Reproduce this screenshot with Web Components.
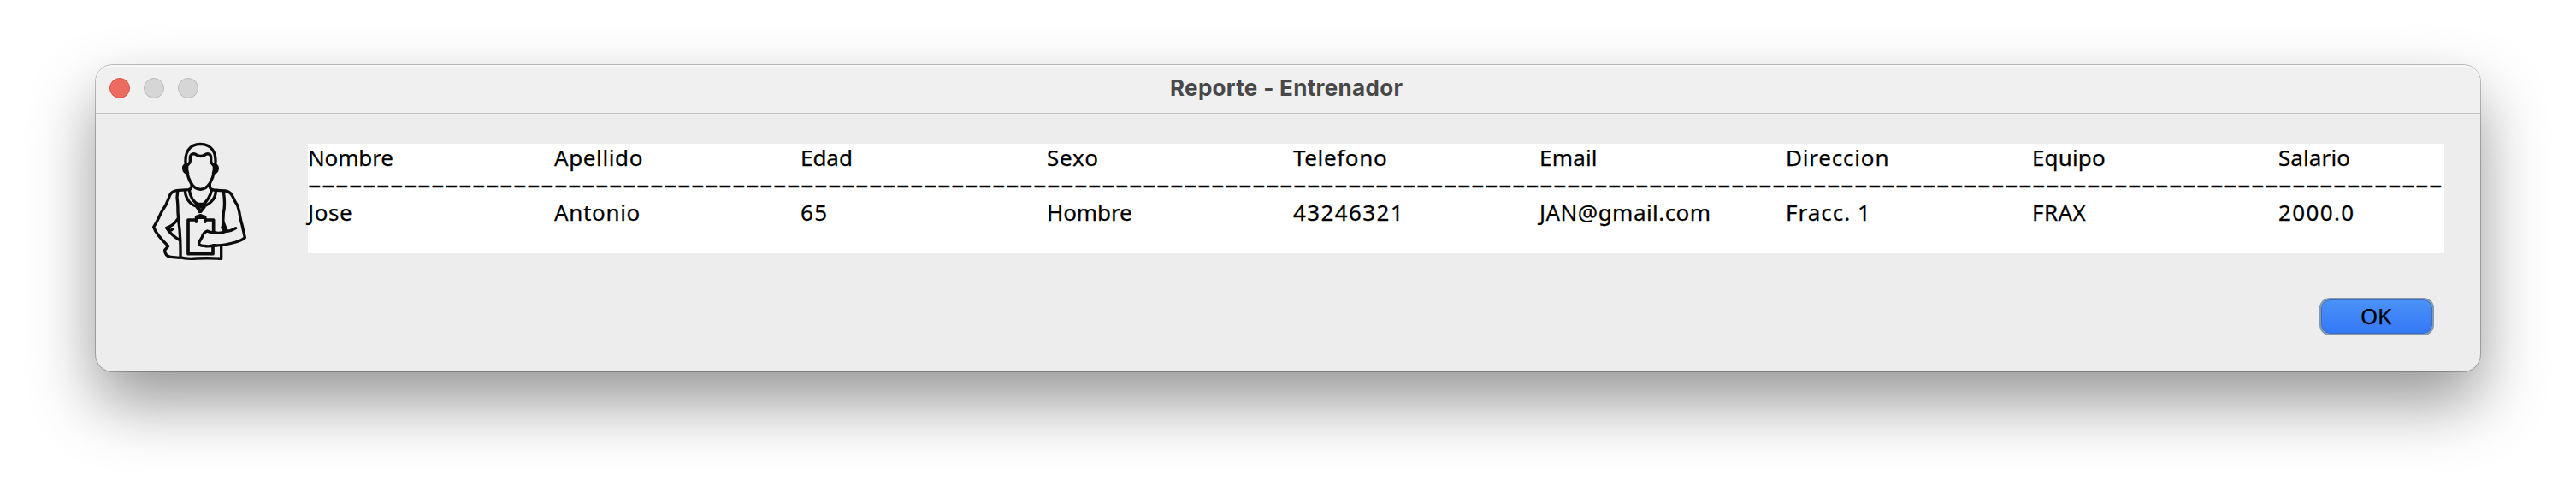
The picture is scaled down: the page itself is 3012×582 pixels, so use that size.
<!DOCTYPE html>
<html lang="es">
<head>
<meta charset="utf-8">
<title>Reporte - Entrenador</title>
<style>
html,body{margin:0;background:#fff}
body{width:3012px;height:582px;overflow:hidden;box-sizing:border-box;padding:76px 0 0 112px;font:26px/32px "Noto Sans",sans-serif;color:#000}
</style>
</head>
<body>
<report-window>
  <window-bar slot="bar"><fit-text ink="272.5" style="font:700 26px/32px Inter,sans-serif">Reporte - Entrenador</fit-text></window-bar>
  <trainer-icon slot="icon"></trainer-icon>
  <report-table slot="report"></report-table>
  <push-button slot="actions"><fit-text ink="37">OK</fit-text></push-button>
</report-window>
<script>
const mount = (el, html) => { el.attachShadow({mode:'open'}).innerHTML = html; };

// Text tracked so that its drawn width equals the "ink" attribute.
customElements.define('fit-text', class extends HTMLElement {
  connectedCallback() {
    if (this.shadowRoot) return;
    mount(this, `<style>:host{display:inline-block;white-space:pre}</style><slot></slot>`);
    const cs = getComputedStyle(this), t = this.textContent;
    const ctx = document.createElement('canvas').getContext('2d');
    ctx.font = `${cs.fontWeight} ${cs.fontSize} ${cs.fontFamily}`;
    const right = ctx.measureText(t).actualBoundingBoxRight;
    this.style.letterSpacing = ((+this.getAttribute('ink') - right) / (t.length - 1)).toFixed(3) + 'px';
  }
});

customElements.define('report-window', class extends HTMLElement {
  connectedCallback() {
    mount(this, `<style>
      :host{display:flex;flex-direction:column;width:2788px;height:358px;border-radius:20px;background:#ededed;
        box-shadow:0 0 0 1px rgba(0,0,0,.24),0 36px 76px rgba(0,0,0,.41)}
      .body{display:flex;padding-top:35px}
      .icon{width:248px;height:128px;display:flex}
      .actions{display:flex;justify-content:flex-end;padding:52px 54px 0 0}
    </style>
    <slot name="bar"></slot>
    <div class="body"><div class="icon"><slot name="icon"></slot></div><slot name="report"></slot></div>
    <div class="actions"><slot name="actions"></slot></div>`);
  }
});

customElements.define('window-bar', class extends HTMLElement {
  connectedCallback() {
    mount(this, `<style>
      :host{display:grid;grid-template-columns:1256px 1fr;align-items:center;height:57px;box-sizing:border-box;padding-bottom:2px;
        background:#f0f0f0;border-bottom:1px solid #c6c6c6;border-radius:20px 20px 0 0;color:#484848;
        box-shadow:inset 0 2px 0 #f8f8f8}
      .lights{display:flex;gap:16px;padding-left:16px}
      i{width:24px;height:24px;border-radius:50%;box-sizing:border-box;background:#d6d6d6;border:1px solid #b9b9b9}
      i.close{background:#ed6b60;border-color:#d85347}
    </style><div class="lights"><i class="close"></i><i></i><i></i></div><slot></slot>`);
  }
});

customElements.define('report-table', class extends HTMLElement {
  connectedCallback() {
    const head = [['Nombre',99.2],['Apellido',102.7],['Edad',58.9],['Sexo',59.2],['Telefono',108.9],['Email',65.8],['Direccion',118.4],['Equipo',85],['Salario',83.2]];
    const data = [['Jose',51],['Antonio',99.5],['65',30.3],['Hombre',99],['43246321',123.8],['JAN@gmail.com',198.8],['Fracc. 1',94],['FRAX',63.5],['2000.0',87.2]];
    const row = r => `<div class="row">${r.map(([t,w]) => `<fit-text ink="${w}">${t}</fit-text>`).join('')}</div>`;
    mount(this, `<style>
      :host{display:block;width:2498px;height:128px;background:#fff;-webkit-text-stroke:.25px #000}
      .row{display:grid;grid-template-columns:repeat(9,288px);height:32px;width:2498px}
      .row fit-text{justify-self:start}
      .rule{height:32px;line-height:30px;width:1300px;white-space:pre;transform:scaleX(1.87);transform-origin:0 0;letter-spacing:.184px;-webkit-text-stroke:.5px #000}
    </style>${row(head)}<div class="rule">${'-'.repeat(156)}</div>${row(data)}`);
  }
});

customElements.define('push-button', class extends HTMLElement {
  connectedCallback() {
    mount(this, `<style>
      :host{display:flex;justify-content:center;align-items:center;width:134px;height:44px;box-sizing:border-box;border-radius:12px;
        border:2px solid #8599ae;background:linear-gradient(#4b92f8,#3377f6) padding-box;box-shadow:inset 0 0 0 1px #3c6fbd;
        padding:0 2px 2px 0;-webkit-text-stroke:.25px #000}
    </style><slot></slot>`);
  }
});

customElements.define('trainer-icon', class extends HTMLElement {
  connectedCallback() {
    mount(this, `<style>:host{display:block;margin:-17px 0 0 48px}svg{display:block}</style>
    <svg width="150" height="165" viewBox="0 0 450 495" fill="none" stroke="#0c0c0c" stroke-width="10" stroke-linecap="round" stroke-linejoin="round">
      <path d="M172 127C166 82 183 53 223 52C263 53 281 82 275 127"/>
      <path d="M176 127C182 121 187 121 187 112V97C190 84 202 84 211 91Q224 98 237 91C246 84 258 84 260 97V112C260 121 265 121 270 127"/>
      <path d="M176 127V148C180 174 193 210 223 211C253 210 267 174 271 148V127"/>
      <path d="M175 126C159 122 160 151 179 154M271 126C287 122 288 151 268 154M170 132L177 148M277 132L270 148"/>
      <path d="M192 191V202Q190 211 180 212L139 215Q123 217 116 231C107 254 105 264 89 286C79 302 78 314 59 343C65 363 85 386 110 410L98 424Q99 446 119 448L151 451"/>
      <path d="M256 191V202Q257 211 270 213L309 216Q326 218 332 229C341 242 341 251 352 265C362 289 361 312 369 335L379 380C371 389 362 391 347 396Q302 409 268 408"/>
      <path d="M169 215C171 246 190 269 219 273C252 269 277 247 277 216M184 213C187 236 200 256 217 265M262 214C258 235 246 252 231 265M209 262H237V273L224 289L211 274Z"/>
      <path d="M143 218L141 240Q144 260 144 291Q146 320 150 352Q154 399 153 449Q172 456 211 453Q255 451 296 454V410M304 219Q311 263 304 294L301 348"/>
      <path d="M146 311Q129 339 104 346Q122 373 151 389M109 347Q119 360 126 350M303 325Q310 344 316 357M300 344L307 358M347 347Q329 358 313 358Q294 367 274 363"/>
      <path stroke-width="11" d="M208 318H180V437H267V410M239 318H269V359"/>
      <path d="M208 325V311Q208 305 216 305Q222 299 230 305Q240 305 240 311V325M212 310H235"/>
      <path d="M274 363Q256 362 247 357Q233 362 229 378L218 397Q216 410 237 409Q252 413 273 407M219 276V290"/>
    </svg>`);
  }
});
</script>
</body>
</html>
